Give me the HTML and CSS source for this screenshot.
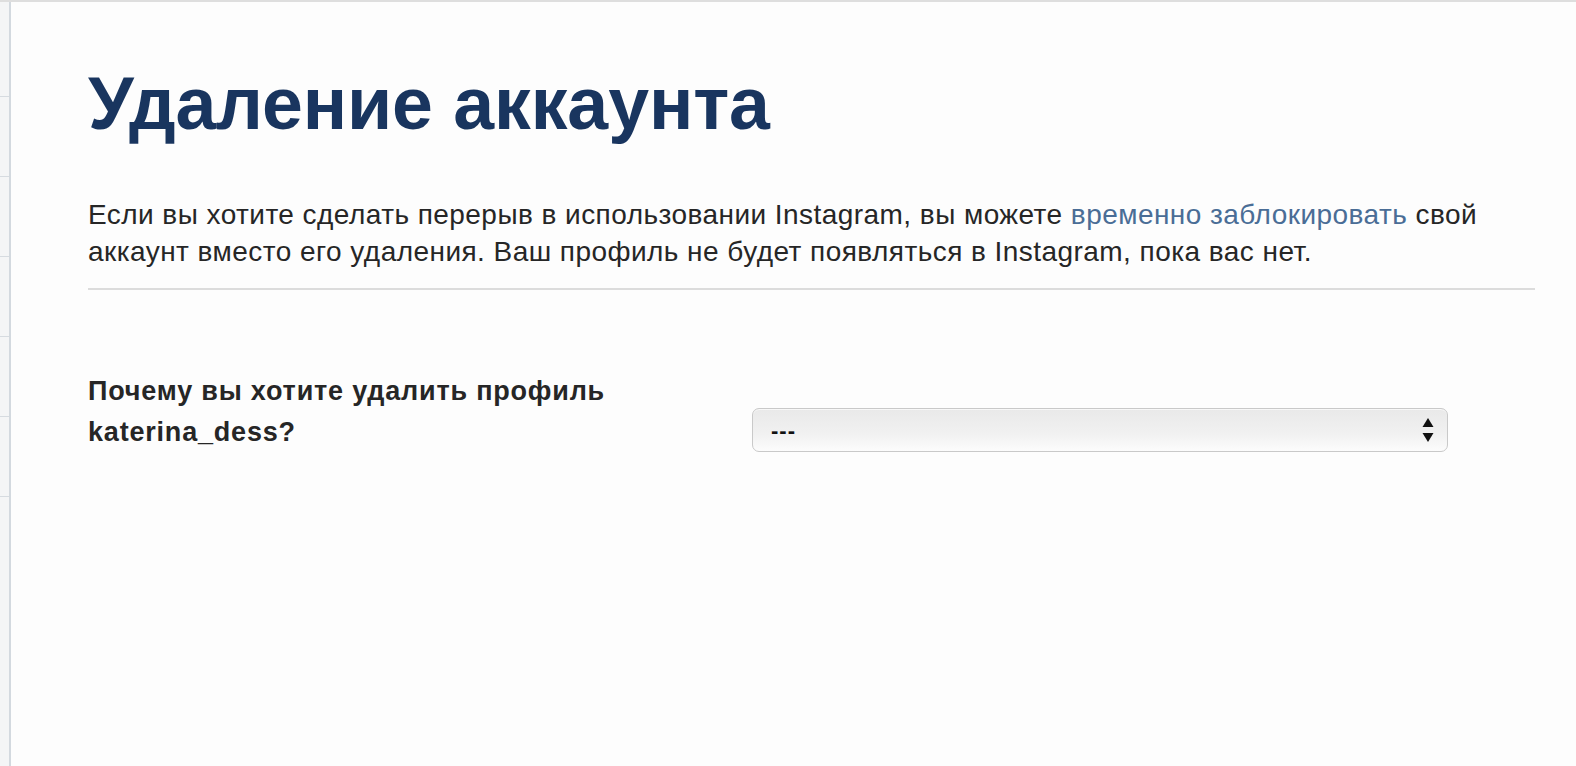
FILE: index.html
```html
<!DOCTYPE html>
<html lang="ru">
<head>
<meta charset="utf-8">
<title>Удаление аккаунта</title>
<link rel="stylesheet" href="styles.css">
</head>
<body>
<div class="page">
  <aside class="side">
    <div class="side-item"></div>
    <div class="side-item"></div>
    <div class="side-item"></div>
    <div class="side-item"></div>
    <div class="side-item"></div>
    <div class="side-item"></div>
  </aside>
  <main class="content">
    <h1 class="title">Удаление аккаунта</h1>
    <p class="intro">Если вы хотите сделать перерыв в использовании Instagram, вы можете <a class="link" href="#">временно заблокировать</a> свой аккаунт вместо его удаления. Ваш профиль не будет появляться в Instagram, пока вас нет.</p>
    <hr class="divider">
    <div class="reason">
      <label class="reason-label" for="reason">Почему вы хотите удалить профиль katerina_dess?</label>
      <div class="select" id="reason">
        <span class="select-value">---</span>
        <svg class="select-arrows" width="12" height="26" viewBox="0 0 12 26" aria-hidden="true">
          <path d="M6 1 L11.5 10 L0.5 10 Z" fill="#111"/>
          <path d="M6 25 L11.5 16 L0.5 16 Z" fill="#111"/>
        </svg>
      </div>
    </div>
  </main>
</div>
</body>
</html>
```

FILE: styles.css
```css
* { box-sizing: border-box; }

html, body {
  margin: 0;
  padding: 0;
  background: #fdfdfd;
}

html { overflow: hidden; }

body {
  font-family: "Liberation Sans", Arial, sans-serif;
  color: #262626;
  height: 766px;
  overflow: hidden;
  border-top: 2px solid #dedede;
}

.page {
  display: flex;
  height: 100%;
}

.side {
  width: 11px;
  flex: none;
  background: #f4f5f6;
  border-right: 2px solid #d3d9df;
  padding-top: 15px;
  display: flex;
  flex-direction: column;
}

.side-item {
  height: 80px;
  flex: none;
  border-bottom: 1px solid #d6dbe0;
}

.content {
  flex: 1;
  min-width: 0;
  padding: 0 41px 0 77px;
}

.title {
  margin: 58px 0 0;
  font-size: 73.5px;
  line-height: 88px;
  font-weight: 700;
  color: #19355f;
  letter-spacing: -0.1px;
}

.intro {
  margin: 48px 0 0;
  font-size: 28px;
  line-height: 37px;
  letter-spacing: 0.45px;
  color: #262626;
  max-width: 1440px;
}

.link {
  color: #4a6d96;
  text-decoration: none;
}

.divider {
  margin: 18px 0 0;
  border: 0;
  border-top: 2px solid #dcdcdc;
  height: 0;
}

.reason {
  display: flex;
  align-items: flex-start;
  margin-top: 81px;
}

.reason-label {
  width: 664px;
  flex: none;
  font-size: 27px;
  line-height: 41px;
  font-weight: 700;
  letter-spacing: 0.8px;
  color: #262626;
  padding-right: 100px;
}

.select {
  margin-top: 37px;
  width: 696px;
  height: 44px;
  flex: none;
  border: 1px solid #c9c9c9;
  border-radius: 7px;
  background: linear-gradient(#e9e9e9, #f1f1f1 60%, #fcfcfc);
  box-shadow: inset 0 1px 0 #f8f8f8;
  display: flex;
  align-items: center;
  justify-content: space-between;
  padding: 0 13px 0 18px;
}

.select-value {
  font-size: 22px;
  font-weight: 700;
  letter-spacing: 1px;
  color: #111;
  transform: translateY(1px);
}

.select-arrows {
  display: block;
}
```
